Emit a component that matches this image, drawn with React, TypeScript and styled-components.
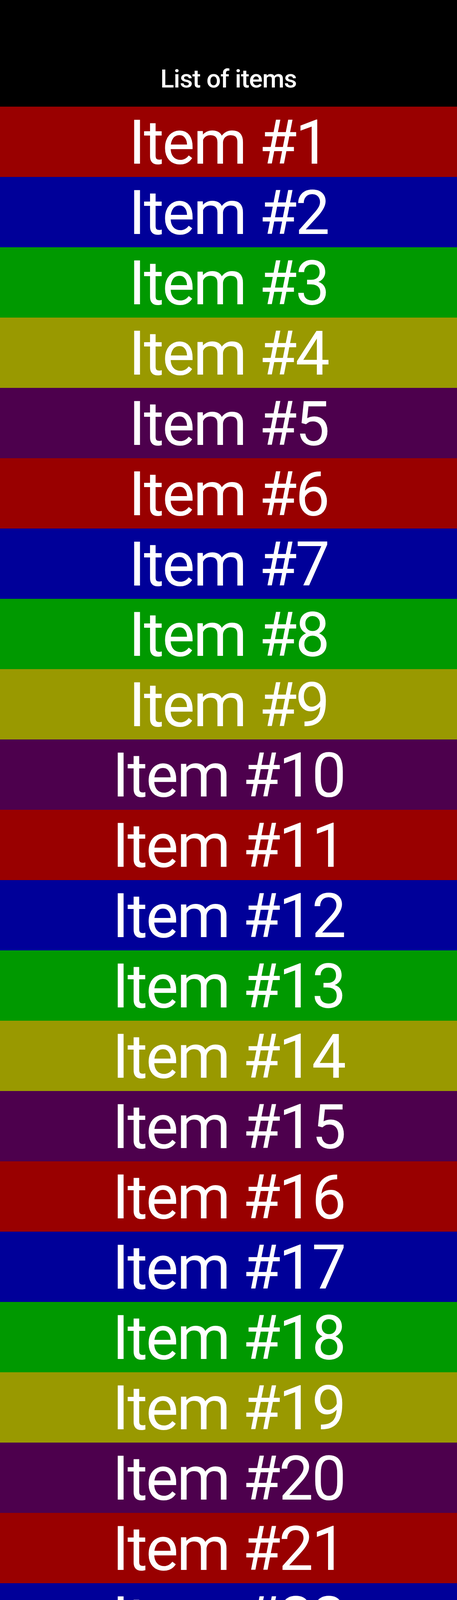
import React from "react";
import styled, { createGlobalStyle } from "styled-components";

const GlobalStyle = createGlobalStyle`
  html, body {
    margin: 0;
    padding: 0;
    background: #000000;
  }
  body {
    font-family: "Roboto", "Liberation Sans", sans-serif;
    color: #ffffff;
  }
`;

const Screen = styled.div`
  display: flex;
  flex-direction: column;
  width: 100%;
  min-height: 100vh;
  background: #000000;
`;

const Header = styled.header`
  display: flex;
  justify-content: center;
  padding: 170px 0 38px;
  background: #000000;
`;

const Title = styled.h1`
  margin: 0;
  font-family: "Roboto", "Liberation Sans", sans-serif;
  font-size: 65px;
  line-height: 1;
  font-weight: 500;
  letter-spacing: -1px;
  color: #ffffff;
`;

const List = styled.ul`
  display: flex;
  flex-direction: column;
  margin: 0;
  padding: 0;
  list-style: none;
`;

const Row = styled.li<{ $bg: string }>`
  display: flex;
  align-items: center;
  justify-content: center;
  height: 180px;
  box-sizing: border-box;
  padding-top: 5px;
  background: ${(p) => p.$bg};
`;

const Label = styled.span`
  font-family: "Roboto", "Liberation Sans", sans-serif;
  font-size: 157px;
  line-height: 1;
  font-weight: 400;
  letter-spacing: -4px;
  color: #ffffff;
  white-space: nowrap;
`;

const palette = ["#990000", "#000099", "#009900", "#999900", "#4d004d"];

const items = Array.from({ length: 25 }, (_, i) => ({
  id: i + 1,
  color: palette[i % palette.length],
}));

export default function App() {
  return (
    <>
      <GlobalStyle />
      <Screen>
        <Header>
          <Title>List of items</Title>
        </Header>
        <List>
          {items.map((item) => (
            <Row key={item.id} $bg={item.color}>
              <Label>Item #{item.id}</Label>
            </Row>
          ))}
        </List>
      </Screen>
    </>
  );
}
